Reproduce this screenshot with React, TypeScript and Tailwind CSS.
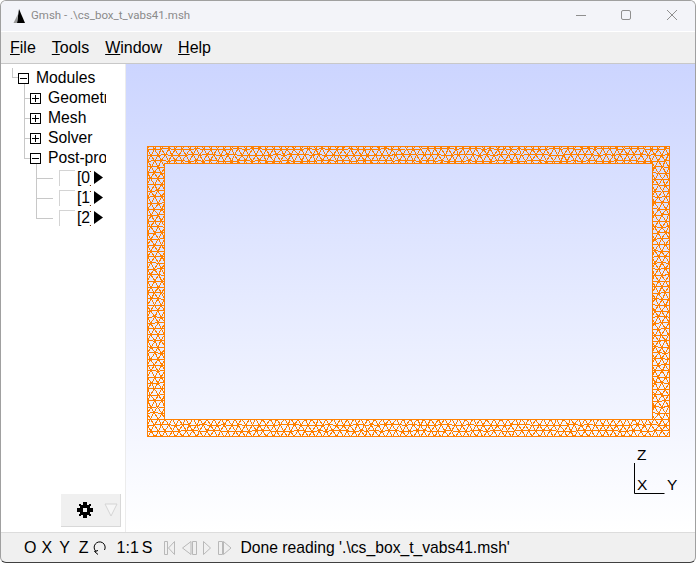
import { useMemo } from 'react';

// triangular lattice clipped to the box section band
function meshPath() {
  let seed = 41;
  const rnd = () => {
    seed = (seed * 16807) % 2147483647;
    return seed / 2147483647 - 0.5;
  };
  const step = 7;
  const h = 6;
  const cols = 78;
  const rows = 51;
  const pts: [number, number][][] = [];
  for (let r = 0; r < rows; r++) {
    const row: [number, number][] = [];
    for (let c = 0; c < cols; c++) {
      row.push([
        18 + c * step + (r % 2 ? step / 2 : 0) + rnd() * 1.2,
        79 + r * h + rnd() * 1.2,
      ]);
    }
    pts.push(row);
  }
  const inBand = (x: number, y: number) => !(x > 42 && x < 524 && y > 102 && y < 354);
  let d = '';
  const seg = (a: [number, number], b: [number, number]) => {
    if (inBand((a[0] + b[0]) / 2, (a[1] + b[1]) / 2)) {
      d += `M${a[0].toFixed(1)} ${a[1].toFixed(1)}L${b[0].toFixed(1)} ${b[1].toFixed(1)}`;
    }
  };
  for (let r = 0; r < rows; r++) {
    for (let c = 0; c < cols; c++) {
      if (c + 1 < cols) seg(pts[r][c], pts[r][c + 1]);
      if (r + 1 < rows) {
        seg(pts[r][c], pts[r + 1][c]);
        const n = r % 2 ? c + 1 : c - 1;
        if (n >= 0 && n < cols) seg(pts[r][c], pts[r + 1][n]);
      }
    }
  }
  return d;
}

function Box({ open }: { open?: boolean }) {
  return (
    <span className="relative z-10 flex h-[11px] w-[11px] shrink-0 items-center justify-center border border-black bg-white">
      <span className="absolute h-px w-[7px] bg-black" />
      {!open && <span className="absolute h-[7px] w-px bg-black" />}
    </span>
  );
}

function Node({ label, open }: { label: string; open?: boolean }) {
  return (
    <div className="relative flex h-5 items-center gap-[7px] pl-[29px]">
      <span className="absolute left-[23px] top-1/2 h-px w-[6px] bg-[#c8c8c8]" />
      <Box open={open} />
      <span className="w-[58px] overflow-hidden whitespace-nowrap">{label}</span>
    </div>
  );
}

function View({ n }: { n: number }) {
  return (
    <div className="relative flex h-5 items-center pl-[58px]">
      <span className="absolute left-[35px] top-1/2 h-px w-[17px] bg-[#c8c8c8]" />
      <span className="h-[16px] w-[16px] border-l border-t border-[#d4d4d4] bg-white" />
      <span className="ml-[2px] w-[14px] overflow-hidden whitespace-nowrap">[{n}]</span>
      <svg width="9" height="13" viewBox="0 0 9 13" className="mb-[2px] ml-[3px]">
        <path d="M0 0L9 6.5L0 13Z" fill="#000" />
      </svg>
    </div>
  );
}

function Tree() {
  return (
    <aside className="relative w-[125px] shrink-0 border-r border-[#ececec] bg-white pt-[4px] text-[15.700px] leading-5 text-black">
      <span className="absolute left-[11px] top-[4px] h-[9px] w-px bg-[#c8c8c8]" />
      <span className="absolute left-[11px] top-[13px] h-px w-[6px] bg-[#c8c8c8]" />
      <span className="absolute left-[23px] top-[20px] h-[74px] w-px bg-[#c8c8c8]" />
      <span className="absolute left-[35px] top-[100px] h-[54px] w-px bg-[#c8c8c8]" />
      <div className="flex h-5 items-center gap-[7px] pl-[17px]">
        <Box open />
        <span>Modules</span>
      </div>
      <Node label="Geometry" />
      <Node label="Mesh" />
      <Node label="Solver" />
      <Node label="Post-processing" open />
      <View n={0} />
      <View n={1} />
      <View n={2} />
      <div className="absolute bottom-[5px] left-[60px] flex h-[33px] w-[60px] items-center border-b border-r border-[#d8d8d8] bg-[#f0f0f0]">
        <svg width="18" height="18" viewBox="0 0 18 18" className="ml-[15px]" shapeRendering="crispEdges">
          <path d="M7 1H11V4H14V7H17V11H14V14H11V17H7V14H4V11H1V7H4V4H7Z" fill="#000" />
          <rect x="3" y="3" width="2" height="2" fill="#000" />
          <rect x="13" y="3" width="2" height="2" fill="#000" />
          <rect x="3" y="13" width="2" height="2" fill="#000" />
          <rect x="13" y="13" width="2" height="2" fill="#000" />
          <rect x="7" y="7" width="4" height="4" fill="#f0f0f0" />
        </svg>
        <svg width="14" height="14" viewBox="0 0 14 14" className="ml-[10px]">
          <path d="M1 1H13L7 13Z" fill="#f6f6f6" stroke="#d4d4d4" />
        </svg>
      </div>
    </aside>
  );
}

function Canvas() {
  const d = useMemo(meshPath, []);
  return (
    <div className="relative min-w-0 flex-1 bg-gradient-to-b from-[#ccd5ff] to-[#ffffff]">
      <svg width="570" height="469" className="absolute left-0 top-0">
        <defs>
          <clipPath id="band">
            <path clipRule="evenodd" d="M21 82H544V373H21ZM38 99V356H526V99Z" />
          </clipPath>
        </defs>
        <path d={d} clipPath="url(#band)" fill="none" stroke="#ff8000" strokeWidth="1" shapeRendering="crispEdges" />
        <path d="M21.500 82.500H543.500V372.500H21.500ZM38.500 99.500V355.500H526.500V99.500Z" fill="none" stroke="#ff8000" strokeWidth="1" shapeRendering="crispEdges" />
        <path d="M508.500 399V429.500H538.500" fill="none" stroke="#000" />
      </svg>
      <span className="absolute left-[511px] top-[381px] text-[15.500px] leading-5">Z</span>
      <span className="absolute left-[511px] top-[411px] text-[15.500px] leading-5">X</span>
      <span className="absolute left-[541px] top-[411px] text-[15.500px] leading-5">Y</span>
    </div>
  );
}

export default function App() {
  return (
    <div className="flex h-[563px] w-[696px] flex-col overflow-hidden rounded-[6px] border border-[#a0a0a0] border-b-[#404040] bg-[#f0f0f0] font-['Liberation_Sans',sans-serif] text-black">
      <header className="flex h-[31px] shrink-0 items-center border-b border-white bg-[#f3f4f9]">
        <svg width="15" height="16" viewBox="0 0 15 16" className="ml-[11px]">
          <path d="M7 1L13 15H5Z" fill="#000" />
          <path d="M6 6L1.500 15H5Z" fill="#9a9a9a" />
        </svg>
        <span className="ml-[4px] font-['Roboto',sans-serif] text-[11.500px] text-[#8a8a8a]">Gmsh - .\cs_box_t_vabs41.msh</span>
        <div className="ml-auto flex items-center pb-[2px]">
          <svg width="12" height="12" viewBox="0 0 12 12" className="mr-[33px]">
            <path d="M1 6.500H11" stroke="#8f8f8f" />
          </svg>
          <svg width="12" height="12" viewBox="0 0 12 12" className="mr-[34px]">
            <rect x="1.500" y="1.500" width="9" height="9" rx="1.500" fill="none" stroke="#8f8f8f" />
          </svg>
          <svg width="12" height="12" viewBox="0 0 12 12" className="mr-[17px]">
            <path d="M1 1L11 11M11 1L1 11" stroke="#8f8f8f" />
          </svg>
        </div>
      </header>
      <nav className="flex h-[32px] shrink-0 items-center gap-[16px] border-b border-[#c8c8c8] pl-[9px] text-[16px]">
        <span><u>F</u>ile</span>
        <span><u>T</u>ools</span>
        <span><u>W</u>indow</span>
        <span><u>H</u>elp</span>
      </nav>
      <main className="flex min-h-0 flex-1">
        <Tree />
        <Canvas />
      </main>
      <footer className="flex h-[30px] shrink-0 items-center border-t border-[#dcdcdc] pl-[23px] text-[16px]">
        <span>O</span>
        <span className="ml-[5px]">X</span>
        <span className="ml-[7px]">Y</span>
        <span className="ml-[9px]">Z</span>
        <svg width="16" height="16" viewBox="0 0 16 16" className="ml-[3px]">
          <path d="M4 11.500A5.500 5.500 0 1 1 12.500 10" fill="none" stroke="#000" />
          <path d="M6 10.500L2.500 11.500L6 14.500" fill="none" stroke="#000" />
        </svg>
        <span className="ml-[9px]">1:1</span>
        <span className="ml-[3px]">S</span>
        <svg width="68" height="14" viewBox="0 0 68 14" className="ml-[11px]">
          <g fill="none" stroke="#b8b8b8">
            <path d="M0.500 0.500V13.500H3.500V0.500ZM10.500 0.500L4.500 7L10.500 13.500Z" />
            <path d="M27 0.500L18.500 7L27 13.500ZM28.500 0.500V13.500H32.500V0.500Z" />
            <path d="M39.500 0.500L46.500 7L39.500 13.500Z" />
            <path d="M54.500 0.500V13.500H58.500V0.500ZM59.500 0.500L67 7L59.500 13.500Z" />
          </g>
        </svg>
        <span className="ml-[9px] whitespace-nowrap text-[15.700px]">Done reading '.\cs_box_t_vabs41.msh'</span>
      </footer>
    </div>
  );
}
